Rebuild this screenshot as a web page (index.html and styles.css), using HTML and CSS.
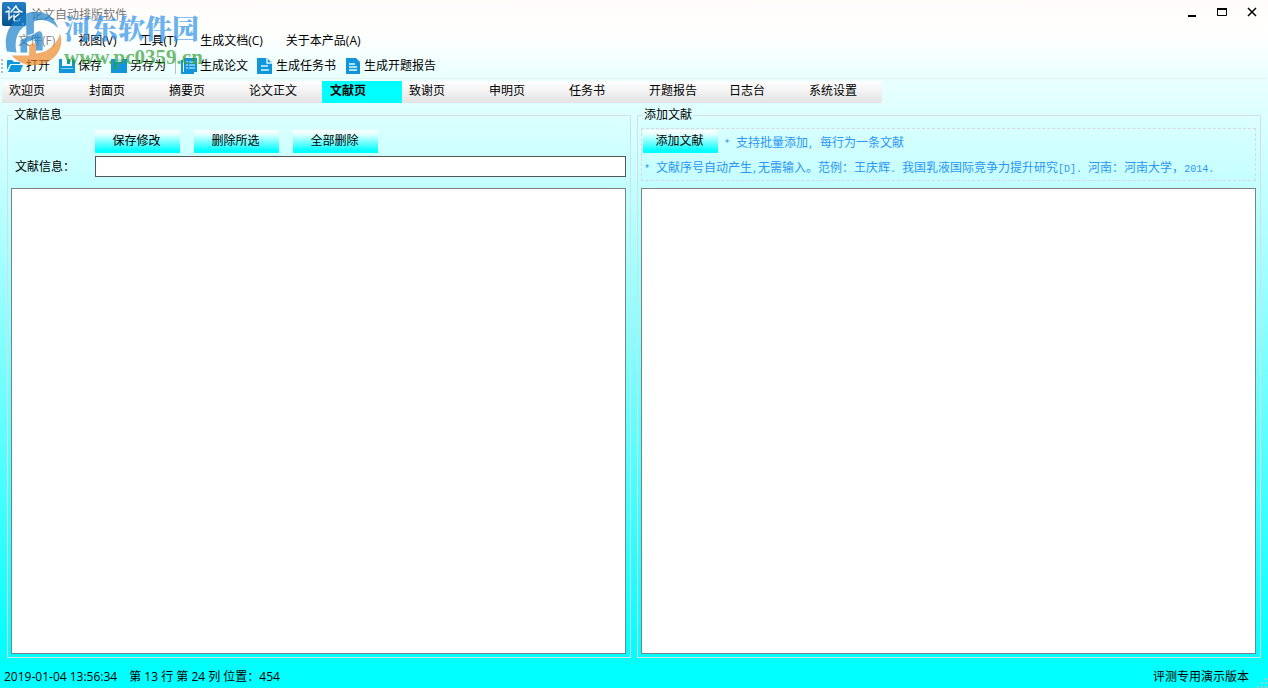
FILE: index.html
```html
<!DOCTYPE html>
<html lang="zh-CN">
<head>
<meta charset="utf-8">
<title>论文自动排版软件</title>
<link rel="stylesheet" href="styles.css">
</head>
<body>
<div class="window">
  <header class="titlebar">
    <svg class="app-icon" viewBox="0 0 24 24" aria-hidden="true">
      <defs><linearGradient id="appBlue" x1="0" y1="0" x2="0" y2="1"><stop offset="0" stop-color="#2480c6"/><stop offset="1" stop-color="#07518c"/></linearGradient></defs>
      <rect width="24" height="24" rx="2" fill="url(#appBlue)"/>
      <path d="M6 5l2 2M4 10l3-1v8l3-3M14 4l-5 6M14 4c1 3 3 5 6 6M12 10h5M12 13v5c0 2 6 1 6-1M17 12l-5 4" fill="none" stroke="#fff" stroke-width="1.4" stroke-linecap="round"/>
      <circle cx="21" cy="22" r="1.5" fill="#9cc8ed"/>
    </svg>
    <h1 class="title">论文自动排版软件</h1>
    <div class="window-buttons">
      <button class="win-btn" aria-label="最小化"><svg viewBox="0 0 10 10"><path d="M1 9h8" stroke="#000" stroke-width="2"/></svg></button>
      <button class="win-btn" aria-label="最大化"><svg viewBox="0 0 10 10"><path d="M.5 2v6.500h9V2" fill="none" stroke="#000" stroke-width="1"/><path d="M0 2h10" stroke="#000" stroke-width="2"/></svg></button>
      <button class="win-btn" aria-label="关闭"><svg viewBox="0 0 10 10"><path d="M1 1l8 8M9 1l-8 8" stroke="#000" stroke-width="1.5"/></svg></button>
    </div>
  </header>
  <nav class="menubar">
    <button class="menu faded">文件(F)</button>
    <button class="menu">视图(V)</button>
    <button class="menu">工具(T)</button>
    <button class="menu">生成文档(C)</button>
    <button class="menu">关于本产品(A)</button>
  </nav>
  <div class="toolbar">
    <span class="grip"></span>
    <button class="tool"><svg viewBox="0 0 16 16"><path d="M0 12V3q0-1 1-1h4l2 2h5q1 0 1 1v1H4q-1 0-1.500 1z" fill="#1296db"/><path d="M4 7h12l-3 7H1z" fill="#1296db"/></svg>打开</button>
    <button class="tool"><svg viewBox="0 0 16 16"><path d="M0 1h3v7h10V1h1l2 2v12H0z" fill="#1296db"/><path d="M2 10h12v3H2z" fill="#8ccdf0"/><path d="M2 11h12v3H2z" fill="#1296db"/><path d="M8 1h3v5H8z" fill="#1296db"/></svg>保存</button>
    <button class="tool"><svg viewBox="0 0 16 16"><path d="M0 1h16v14H0z" fill="#1296db"/><path d="M4 1h7v3H4z" fill="#b7dff1"/></svg>另存为</button>
    <span class="divider"></span>
    <button class="tool"><svg viewBox="0 0 16 16"><path d="M0 2h2v12h11v2H0zM3 0h13v14H3z" fill="#1296db"/><path d="M5 4h2m1 0h6M5 7h2m1 0h6M5 10h2m1 0h6" stroke="#d8f3ff"/></svg>生成论文</button>
    <button class="tool"><svg viewBox="0 0 16 16"><path d="M0 0h10l5 5v11H0z" fill="#1296db"/><path d="M10 0v5h5M4 8h7M4 12h8" fill="none" stroke="#d8f8ff" stroke-width="1.500"/></svg>生成任务书</button>
    <button class="tool"><svg viewBox="0 0 16 16"><path d="M1 0h10l4 4v12H1z" fill="#1296db"/><path d="M4 6h6M4 9h8M4 12h8" stroke="#e8fbff" stroke-width="1.500"/></svg>生成开题报告</button>
  </div>
  <div class="tabs" role="tablist">
    <button class="tab" role="tab">欢迎页</button><button class="tab" role="tab">封面页</button><button class="tab" role="tab">摘要页</button><button class="tab" role="tab">论文正文</button><button class="tab active" role="tab" aria-selected="true">文献页</button><button class="tab" role="tab">致谢页</button><button class="tab" role="tab">申明页</button><button class="tab" role="tab">任务书</button><button class="tab" role="tab">开题报告</button><button class="tab" role="tab">日志台</button><button class="tab" role="tab">系统设置</button>
  </div>
  <main class="panels">
    <fieldset class="group">
      <legend>文献信息</legend>
      <div class="group-body">
        <div class="info">
          <div class="actions"><button class="action">保存修改</button><button class="action">删除所选</button><button class="action">全部删除</button></div>
          <label class="info-label" for="info">文献信息：</label>
          <input class="info-input" id="info" type="text">
        </div>
        <textarea class="list" aria-label="文献列表"></textarea>
      </div>
    </fieldset>
    <fieldset class="group">
      <legend>添加文献</legend>
      <div class="group-body">
        <div class="hints">
          <div class="hint-row"><button class="action add">添加文献</button><p class="hint"><span class="latin">* </span>支持批量添加<span class="latin">, </span>每行为一条文献</p></div>
          <p class="hint"><span class="latin">* </span>文献序号自动产生<span class="latin">,</span>无需输入。范例：王庆辉<span class="latin">. </span>我国乳液国际竞争力提升研究<span class="latin">[D]. </span>河南：河南大学，<span class="latin">2014.</span></p>
        </div>
        <textarea class="list" aria-label="添加文献内容"></textarea>
      </div>
    </fieldset>
  </main>
  <footer class="status">
    <span>2019-01-04 13:56:34</span><span class="position">第 13 行 第 24 列 位置：454</span>
    <span class="edition">评测专用演示版本</span>
    <svg class="size-grip" viewBox="0 0 10 10" aria-hidden="true"><path d="M8 0h2v2H8zM4 4h2v2H4zM8 4h2v2H8zM0 8h2v2H0zM4 8h2v2H4zM8 8h2v2H8z" fill="#a9c9c9"/></svg>
  </footer>
  <div class="watermark" aria-hidden="true">
    <svg class="mark-logo" viewBox="0 0 60 60">
      <path d="M3 43C-2 25 9 5 29 2c14-2 24 6 27 17-7-8-17-11-25-7v12l-8 3V16C14 20 10 33 13 44z" fill="#1b82cc"/>
      <path d="M31 25c5-5 9-4 9 3v14h-8V30l-8 3v11h-7V31z" fill="#1b82cc"/>
      <path d="M58 24c5 15-5 31-24 33-11 1-20-3-26-10h18V36l7-2v11c13-1 22-10 25-21z" fill="#f08a2c"/>
    </svg>
    <span class="mark-name">河东软件园</span>
    <span class="mark-url">www.pc0359.cn</span>
  </div>
</div>
</body>
</html>
```
FILE: styles.css
```css
* { box-sizing: border-box; }
body {
  margin: 0;
  font: 12px/16px "Open Sans", "Noto Sans CJK SC", sans-serif;
  color: #000;
}
button, input, textarea { font: inherit; color: inherit; }
button { border: 0; padding: 0; background: none; white-space: nowrap; }
.window {
  position: relative;
  display: flex;
  flex-direction: column;
  min-height: 100vh;
  background: linear-gradient(#fffcfa 0, #fff 5%, #ebffff 11%, #bff 30%, #0ff 95%);
}
.titlebar { display: flex; align-items: center; height: 28px; padding-left: 2px; }
.app-icon { width: 24px; height: 24px; }
.title { margin: 2px 0 0 5px; font-size: 12px; font-weight: 400; color: #777; }
.window-buttons { display: flex; margin-left: auto; padding: 0 1px 4px 0; }
.win-btn { display: grid; place-items: center; width: 30px; height: 20px; }
.win-btn svg { width: 10px; height: 10px; }
.menubar { display: flex; gap: 23px; height: 26px; padding-left: 18px; }
.faded { color: #888; }
.toolbar {
  display: flex;
  align-items: center;
  gap: 9px;
  height: 25px;
  margin-right: 2px;
  border-bottom: 1px solid #e6f2f2;
}
.grip { width: 2px; height: 14px; margin: 0 -5px 0 1px; border-left: 2px dotted #aebcbc; }
.tool { display: flex; align-items: center; gap: 3px; }
.tool svg { width: 16px; height: 16px; }
.divider { width: 1px; height: 16px; margin-right: -4px; background: #bbc; }
.tabs { display: flex; margin: 2px 0 0 2px; font-family: "Liberation Sans", "Noto Sans CJK SC", sans-serif; }
.tab {
  width: 80px;
  height: 22px;
  padding: 0 0 3px 7px;
  text-align: left;
  background: linear-gradient(#fff, #e3e3e3);
}
.tab.active { padding-left: 8px; background: #0ff; font-weight: 700; }
.panels { display: grid; grid-template-columns: 1fr 1fr; gap: 6px; flex: 1; padding: 4px 7px 0; }
.group {
  display: flex;
  min-width: 0;
  margin: 0;
  padding: 0 4px 3px 3px;
  border: 1px solid #d3e0e2;
}
.group legend { margin-left: 2px; padding: 0 1px; }
.group-body { display: flex; flex: 1; flex-direction: column; gap: 7px; min-width: 0; height: 100%; padding-top: 5px; }
.info {
  display: grid;
  grid-template-columns: 80px 1fr;
  grid-template-rows: 23px 21px;
  row-gap: 3px;
  align-items: center;
  height: 53px;
  padding: 2px 0 0 4px;
}
.actions { grid-column: 2; display: flex; gap: 14px; }
.action {
  width: 85px;
  height: 23px;
  padding: 0 2px 2px 0;
  background: linear-gradient(#fff, #e0ffff 20%, #0ff 90%);
}
.add { width: 75px; }
.info-input { width: 100%; height: 21px; border: 1px solid #555; background: #fff; }
.list { flex: 1; width: 100%; border: 1px solid #7a8288; background: #fff; resize: none; }
.hints { height: 53px; padding: 1px 3px 1px 1px; border: 1px dashed #d8d8dc; overflow: hidden; }
.hint-row { display: flex; align-items: center; gap: 5px; margin-bottom: 6px; }
.hint-row .hint { padding-top: 3px; }
.hint { margin: 0 0 0 1px; color: #2b95f5; font-family: "Noto Sans CJK SC", sans-serif; white-space: pre; }
.latin { font-family: "Liberation Mono", monospace; font-size: 10px; }
.status { display: flex; align-items: center; gap: 12px; height: 30px; padding: 8px 1px 0 4px; }
.edition { margin-left: auto; }
.size-grip { width: 10px; height: 10px; margin-left: -4px; align-self: flex-end; }
.watermark {
  position: absolute;
  top: 10px;
  left: 4px;
  display: grid;
  grid-template-columns: 60px auto;
  opacity: .7;
  pointer-events: none;
}
.mark-logo { grid-row: 1 / 3; width: 58px; height: 58px; }
.mark-name { color: #2b92e8; font: 900 27px/36px "Noto Serif CJK SC", "Noto Sans CJK SC", serif; }
.mark-url { color: #35a035; font: 700 21px/22px "Liberation Serif", serif; }
```
